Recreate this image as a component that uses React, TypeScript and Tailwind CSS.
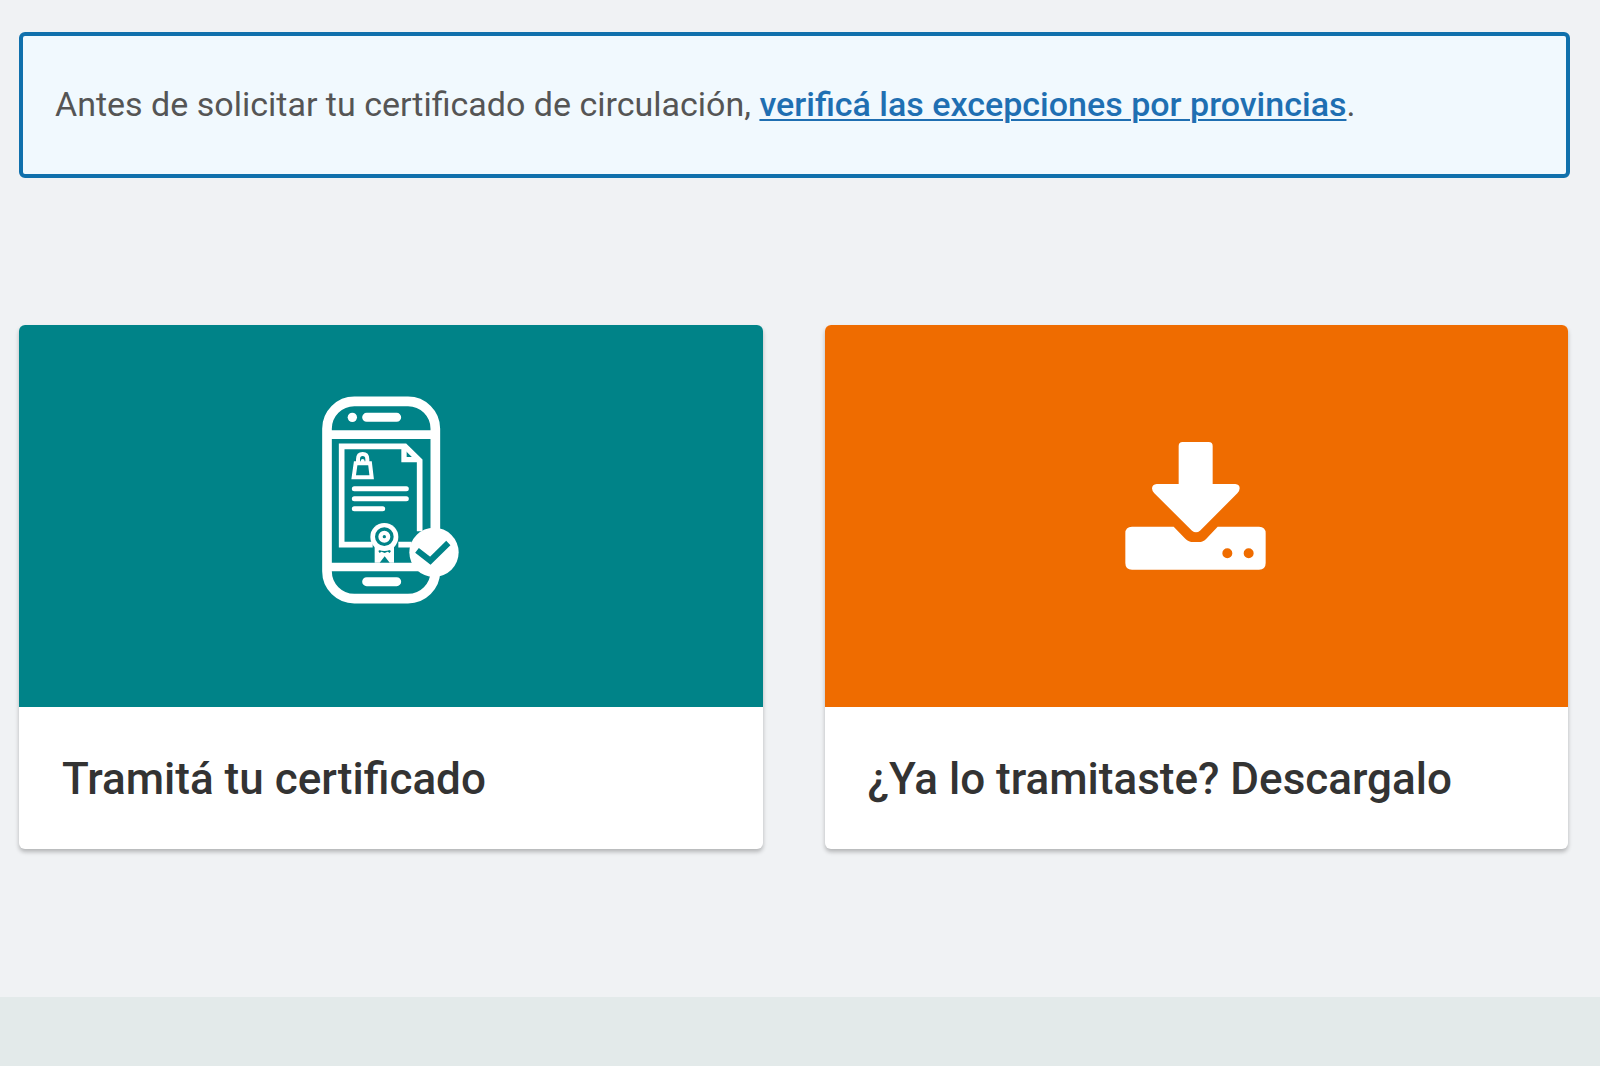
import type { ReactNode } from "react";

/* ================= ICONS ================= */

function PhoneCertificateIcon() {
  return (
    <svg
      viewBox="33 34 417 630"
      className="h-[210px] w-[139px]"
      fill="none"
      stroke="currentColor"
      aria-hidden="true"
    >
      {/* phone */}
      <rect x="51" y="50" width="325" height="592" rx="82" strokeWidth="29" />
      <path d="M52 150H375M52 547H375" strokeWidth="26" />
      <path d="M170 98H260M170 591H260" strokeWidth="27" strokeLinecap="round" />
      <circle cx="127" cy="98" r="14" fill="currentColor" stroke="none" />

      {/* sheet */}
      <path d="M188 480H95V185H285L329 228V440M265 480H305" strokeWidth="17" />
      <path d="M282 185V225H329" strokeWidth="16" />
      <path d="M133 312H289M133 342H289M133 372H218" strokeWidth="15" strokeLinecap="round" />

      {/* lock */}
      <path d="M137 236H180L185 278H131Z" strokeWidth="12" />
      <path d="M144 234V224Q144 208 158 208Q172 208 172 224V234" strokeWidth="12" />
      <circle cx="158" cy="229" r="6" fill="currentColor" stroke="none" />

      {/* medal */}
      <path d="M194 486H252V534H239L224 515L209 534H194Z" fill="currentColor" stroke="none" />
      <path d="M207 502L214 497L224 501L233 497L241 502" stroke="#008388" strokeWidth="7" />
      <circle cx="223" cy="457" r="42" fill="currentColor" stroke="none" />
      <circle cx="223" cy="456" r="23" stroke="#008388" strokeWidth="10" />
      <circle cx="223" cy="456" r="5" fill="#008388" stroke="none" />

      {/* check */}
      <circle cx="372" cy="503" r="74" fill="currentColor" stroke="none" />
      <path d="M321 497L361 528L415 475" stroke="#008388" strokeWidth="18" />
    </svg>
  );
}

function DownloadIcon() {
  return (
    <svg
      viewBox="45 -97 429 621"
      className="h-[207px] w-[143px]"
      fill="currentColor"
      aria-hidden="true"
    >
      <path d="M218 35H296Q308 35 308 47V161H376Q389 162 389 174Q389 182 382 189L270 301Q258 311 246 301L133 189Q126 182 126 174Q127 162 140 161H206V47Q206 35 218 35Z" />
      <path
        fillRule="evenodd"
        d="M66 289H191L226 325Q236 335 250 335H266Q280 335 289 325L323 289H447Q467 289 467 309V398Q467 418 447 418H66Q46 418 46 398V309Q46 289 66 289ZM352 354A15 15 0 1 0 352 384A15 15 0 1 0 352 354ZM416 354A15 15 0 1 0 416 384A15 15 0 1 0 416 354Z"
      />
    </svg>
  );
}

/* ================= CARD ================= */

type CardProps = {
  title: string;
  color: string;
  icon: ReactNode;
};

function Card({ title, color, icon }: CardProps) {
  return (
    <a
      href="#"
      className="block overflow-hidden rounded-md bg-white shadow-[0_3px_4px_rgba(0,0,0,0.25)]"
    >
      <div className={`flex h-[382px] items-center justify-center pb-[30px] text-white ${color}`}>
        {icon}
      </div>
      <h2 className="px-[43px] pt-11 pb-[42px] text-[44px] leading-[56px] font-medium text-[#333333]">
        {title}
      </h2>
    </a>
  );
}

/* ================= PAGE ================= */

export default function App() {
  return (
    <div className="flex min-h-screen flex-col bg-[#f0f2f4] font-['Roboto',sans-serif]">
      <main className="pt-8 pr-[30px] pb-[148px] pl-[19px]">
        <div className="rounded-md border-4 border-[#1070ac] bg-[#f1f9fe] px-8 pt-11 pb-[46px]">
          <p className="text-[34px] leading-[48px] text-[#555555]">
            Antes de solicitar tu certificado de circulación,{" "}
            <a
              href="#"
              className="font-medium text-[#1f6fb2] underline decoration-2 underline-offset-3"
            >
              verificá las excepciones por provincias
            </a>
            .
          </p>
        </div>

        <div className="mt-[147px] grid grid-cols-2 gap-[62px] pr-0.5">
          <Card
            title="Tramitá tu certificado"
            color="bg-[#008388]"
            icon={<PhoneCertificateIcon />}
          />
          <Card
            title="¿Ya lo tramitaste? Descargalo"
            color="bg-[#ef6c00]"
            icon={<DownloadIcon />}
          />
        </div>
      </main>

      <footer className="grow bg-[#e3eaea]" />
    </div>
  );
}
